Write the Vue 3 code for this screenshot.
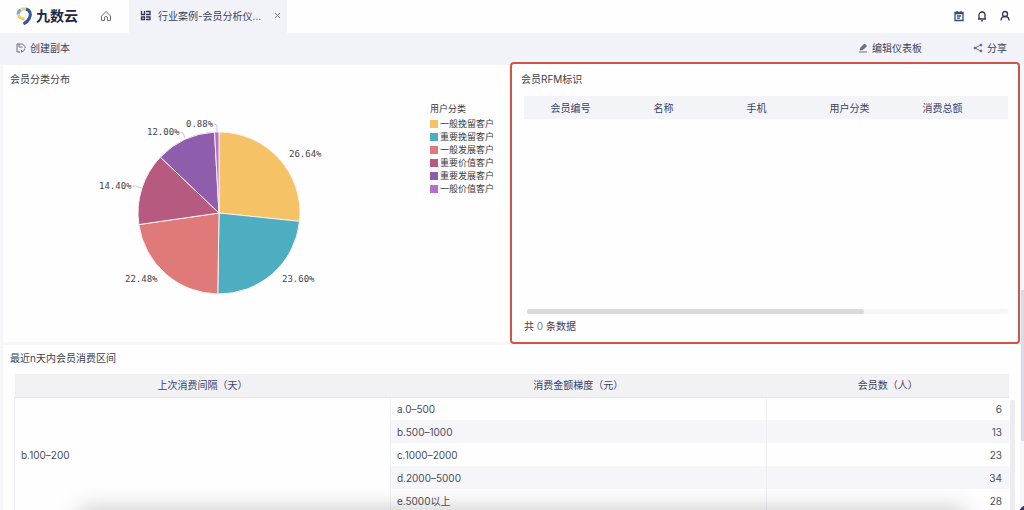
<script setup>
const cx = 129
const cy = 103
const radius = 81

const slices = [
  { name: '一般挽留客户', value: 26.64, color: '#f5c265', x: 199, y: 47 },
  { name: '重要挽留客户', value: 23.6, color: '#4dadc1', x: 192, y: 172 },
  { name: '一般发展客户', value: 22.48, color: '#e07a78', x: 35, y: 172 },
  { name: '重要价值客户', value: 14.4, color: '#b65a80', x: 9, y: 79, line: 'M41 76 L46 76 L51 78' },
  { name: '重要发展客户', value: 12, color: '#8e5dab', x: 57, y: 25, line: 'M89 22 L93 23 L95 28' },
  { name: '一般价值客户', value: 0.88, color: '#b86fcb', x: 96, y: 17, line: 'M124 14 L127 15 L127 22' },
]

let turned = 0
for (const s of slices) {
  const from = (turned / 100) * Math.PI * 2
  turned += s.value
  const to = (turned / 100) * Math.PI * 2
  const point = (a) => `${cx + radius * Math.sin(a)} ${cy - radius * Math.cos(a)}`
  s.path = `M${cx} ${cy} L${point(from)} A${radius} ${radius} 0 0 1 ${point(to)} Z`
}

const memberColumns = ['会员编号', '名称', '手机', '用户分类', '消费总额']

const rows = [
  { range: 'a.0–500', count: 6 },
  { range: 'b.500–1000', count: 13 },
  { range: 'c.1000–2000', count: 23 },
  { range: 'd.2000–5000', count: 34 },
  { range: 'e.5000以上', count: 28 },
]
</script>

<template>
  <div class="app">
    <header class="topbar">
      <a class="brand" href="#" aria-label="九数云">
        <svg width="18" height="20" viewBox="0 0 18 20" fill="none" stroke-width="3">
          <path d="M2 8.5A6 6 0 0 1 5 3.6" stroke="#7fa9c6" />
          <path d="M5.5 3.3A6 6 0 0 1 10 3" stroke="#e9d36a" />
          <path d="M2.2 9A5.5 5.5 0 0 0 8.5 12.5" stroke="#f0cf52" />
          <path d="M10 3C14 4 15.5 8 13.5 12C12.3 14.6 10.5 16.5 7.5 18" stroke="#39539b" />
        </svg>
        <span>九数云</span>
      </a>
      <button class="home" aria-label="首页">
        <svg class="icon" width="12" height="12" viewBox="0 0 12 12">
          <path d="M1.5 6L6 1.5L10.5 6V10.5H7.500V8A1.500 1.500 0 0 0 4.500 8V10.5H1.5Z" />
        </svg>
      </button>
      <div class="tab">
        <svg class="icon dark heavy" width="11" height="11" viewBox="0 0 11 11">
          <path d="M1.500 1V4.500H4.500V1M6 1.500H10V4.500H6M1 7H5M1.500 7V9.500H4.500V7M6 7H10V9.500H6" />
        </svg>
        <span>行业案例-会员分析仪…</span>
        <button aria-label="关闭">
          <svg class="icon" width="7" height="7" viewBox="0 0 7 7"><path d="M1 1L6 6M6 1L1 6" /></svg>
        </button>
      </div>
      <nav class="tools">
        <button aria-label="任务">
          <svg class="icon blue heavy" width="12" height="12" viewBox="0 0 12 12">
            <path d="M2 2.5H10V10.5H2ZM4 1V3.5M8 1V3.5M2 3.5H10M4 6H8M4 8.2H7" />
          </svg>
        </button>
        <button aria-label="通知">
          <svg class="icon dark heavy" width="12" height="12" viewBox="0 0 12 12">
            <path d="M2 9H10M3 9V5A3 3 0 0 1 9 5V9M6 1V2M5 10.8H7" />
          </svg>
        </button>
        <button aria-label="账户">
          <svg class="icon dark heavy" width="12" height="12" viewBox="0 0 12 12">
            <circle cx="6" cy="4" r="2.5" />
            <path d="M2 10.500C2 8 3.5 6.5 6 6.5S10 8 10 10.500" />
          </svg>
        </button>
      </nav>
    </header>

    <div class="actions">
      <button>
        <svg class="icon" width="10" height="10" viewBox="0 0 10 10">
          <path d="M4 9H1V1H6.5L9 3.5V5M3 1V4H6.5M5.5 8.5C7.5 8.7 8.8 7.5 8.5 5.5M5.5 7V9.5" />
        </svg>
        创建副本
      </button>
      <button class="edit">
        <svg class="icon" width="10" height="10" viewBox="0 0 10 10">
          <path d="M1 9H9" />
          <path class="dot" d="M2 7L3 4.5L6.5 1L8.5 3L5 6.5Z" />
        </svg>
        编辑仪表板
      </button>
      <button>
        <svg class="icon" width="10" height="10" viewBox="0 0 10 10">
          <path d="M8 2L2 5L8 8" />
          <circle class="dot" cx="8" cy="2" r="1" />
          <circle class="dot" cx="2" cy="5" r="1" />
          <circle class="dot" cx="8" cy="8" r="1" />
        </svg>
        分享
      </button>
    </div>

    <main class="board">
      <section class="card pie-card">
        <h2>会员分类分布</h2>
        <div class="chart">
          <svg width="240" height="200" viewBox="0 0 240 200" role="img" aria-label="会员分类分布">
            <path
              v-for="s in slices"
              :key="s.name"
              :d="s.path"
              :fill="s.color"
              stroke="#fbeff2"
              stroke-linejoin="round"
            />
            <template v-for="s in slices" :key="s.name">
              <path v-if="s.line" :d="s.line" fill="none" stroke="#cccccc" />
              <text :x="s.x" :y="s.y">{{ s.value.toFixed(2) }}%</text>
            </template>
          </svg>
          <div class="legend">
            <h3>用户分类</h3>
            <ul>
              <li v-for="s in slices" :key="s.name">
                <i :style="{ background: s.color }"></i>{{ s.name }}
              </li>
            </ul>
          </div>
        </div>
      </section>

      <section class="card rfm-card">
        <h2>会员RFM标识</h2>
        <table class="members">
          <colgroup>
            <col v-for="c in memberColumns" :key="c" class="member-col" />
            <col />
          </colgroup>
          <thead>
            <tr>
              <th v-for="c in memberColumns" :key="c">{{ c }}</th>
              <td></td>
            </tr>
          </thead>
        </table>
        <div class="hscroll"><div></div></div>
        <p>共 <span>0</span> 条数据</p>
      </section>

      <section class="card spend-card">
        <h2>最近n天内会员消费区间</h2>
        <div class="spend">
          <table>
            <colgroup>
              <col class="gap-col" />
              <col class="range-col" />
              <col />
            </colgroup>
            <thead>
              <tr>
                <th>上次消费间隔（天）</th>
                <th>消费金额梯度（元）</th>
                <th>会员数（人）</th>
              </tr>
            </thead>
            <tbody>
              <tr v-for="(r, i) in rows" :key="r.range">
                <td v-if="i === 0" class="group" :rowspan="rows.length">b.100–200</td>
                <td>{{ r.range }}</td>
                <td class="num">{{ r.count }}</td>
              </tr>
            </tbody>
          </table>
          <div class="vscroll"></div>
        </div>
      </section>
    </main>

    <div class="page-thumb"></div>
    <div class="bottom-shade"></div>
    <div class="help"></div>
  </div>
</template>

<style>
body {
  margin: 0;
  overflow: hidden;
}
</style>

<style scoped>
.app {
  position: relative;
  display: flex;
  flex-direction: column;
  height: 100vh;
  overflow: hidden;
  background: #f2f3f8;
  color: #3b3f5c;
  font: 10px/16px Inter, "Noto Sans CJK SC", sans-serif;
}
* {
  box-sizing: border-box;
}
button {
  display: flex;
  align-items: center;
  gap: 4px;
  padding: 0;
  border: 0;
  background: none;
  color: inherit;
  font: inherit;
}
h2,
h3,
p,
ul {
  margin: 0;
  padding: 0;
  font-weight: 400;
  font-size: inherit;
  list-style: none;
}
svg {
  flex: none;
}
.icon {
  fill: none;
  stroke: #6b6e80;
  stroke-width: 1;
}
.dark {
  stroke: #303558;
}
.blue {
  stroke: #344a78;
}
.heavy {
  stroke-width: 1.3;
}
.dot {
  fill: #6b6e80;
}
.topbar {
  display: flex;
  align-items: center;
  height: 33px;
  flex: none;
  padding: 0 13px 2px 16px;
  background: #fefefe;
}
.brand {
  display: flex;
  align-items: center;
  gap: 2px;
  width: 84px;
  color: #22263f;
  font-size: 14px;
  font-weight: 700;
  text-decoration: none;
}
.home {
  width: 29px;
}
.tab {
  display: flex;
  align-items: center;
  align-self: stretch;
  gap: 7px;
  width: 158px;
  margin-bottom: -2px;
  padding: 0 6px 2px 11px;
  background: #f2f3f8;
  white-space: nowrap;
}
.tab button {
  margin-left: auto;
}
.tools {
  display: flex;
  gap: 11px;
  margin-left: auto;
}
.actions {
  display: flex;
  align-items: center;
  height: 32px;
  flex: none;
  padding: 0 17px 2px 16px;
}
.edit {
  margin: 0 51px 0 auto;
}
.board {
  display: grid;
  grid-template-columns: 506fr 511fr;
  grid-template-rows: 277px auto;
  row-gap: 3px;
  padding: 0 4px 0 3px;
  background: #f7f7fa;
}
.card {
  min-width: 0;
  background: #fefefe;
}
.card h2 {
  color: #3c3d48;
}
.pie-card {
  padding: 6px 7px;
}
.chart {
  display: flex;
  padding: 15px 11px 0 80px;
  justify-content: space-between;
}
.chart > svg {
  margin-top: 8px;
}
.chart text {
  fill: #444444;
  font: 9px "DejaVu Sans Mono", monospace;
}
.legend {
  width: 64px;
  margin-right: -3px;
  color: #3a3a3a;
  font-size: 9px;
  line-height: 13px;
  white-space: nowrap;
}
.legend h3 {
  margin-bottom: 2px;
}
.legend li {
  display: flex;
  align-items: center;
  gap: 2px;
}
.legend i {
  flex: none;
  width: 8px;
  height: 8px;
}
.rfm-card {
  display: flex;
  flex-direction: column;
  margin: -3px 0 -2px 1px;
  padding: 7px 9px;
  border: 2px solid #cf5549;
  border-radius: 4px;
  z-index: 1;
}
table {
  border-collapse: collapse;
  table-layout: fixed;
  width: 100%;
}
th {
  font-weight: 400;
  color: #3b3f66;
}
.members {
  width: calc(100% - 4px);
  margin: 9px 0 0 3px;
  background: #f3f4f8;
}
.members th {
  height: 23px;
  padding: 0;
}
.member-col {
  width: 93px;
}
.hscroll {
  height: 5px;
  margin: auto 1px 4px 6px;
  border-radius: 3px;
  background: #f6f6f6;
}
.hscroll div {
  width: 70%;
  height: 5px;
  border-radius: 3px;
  background: #dadada;
}
.rfm-card p {
  padding: 0 0 1px 3px;
}
.rfm-card span {
  color: #7c8097;
}
.spend-card {
  grid-column: 1 / -1;
  padding: 5px 5px 0 7px;
}
.spend {
  display: flex;
  gap: 1px;
  margin: 8px 0 0 4px;
}
.gap-col,
.range-col {
  width: 37.8%;
}
.spend th {
  height: 23px;
  padding: 0;
  border-bottom: 1px solid #e3e4ea;
  background: #f2f2f5;
}
.spend td {
  height: 23px;
  padding: 0 7px 0 6px;
  border-right: 1px solid #eeeff3;
  color: #4a4c58;
}
.spend td.num {
  border-right: 0;
  text-align: right;
}
.spend .group {
  border-left: 1px solid #eeeff3;
  background: #fefefe;
}
.spend tbody tr:nth-child(even) {
  background: #f6f6fa;
}
.vscroll {
  flex: none;
  width: 5px;
  margin-top: 26px;
  border-radius: 3px;
  background: #ebebf0;
}
.page-thumb {
  position: absolute;
  right: 0;
  top: 290px;
  width: 3px;
  height: 151px;
  background: #dcdae2;
}
.bottom-shade {
  position: absolute;
  left: 80px;
  right: 60px;
  bottom: -14px;
  height: 12px;
  border-radius: 12px;
  box-shadow: 0 0 22px 2px rgba(40, 40, 50, 0.3);
}
.help {
  position: absolute;
  right: -12px;
  bottom: -12px;
  width: 17px;
  height: 17px;
  border-radius: 50%;
  background: #343b78;
}
</style>
